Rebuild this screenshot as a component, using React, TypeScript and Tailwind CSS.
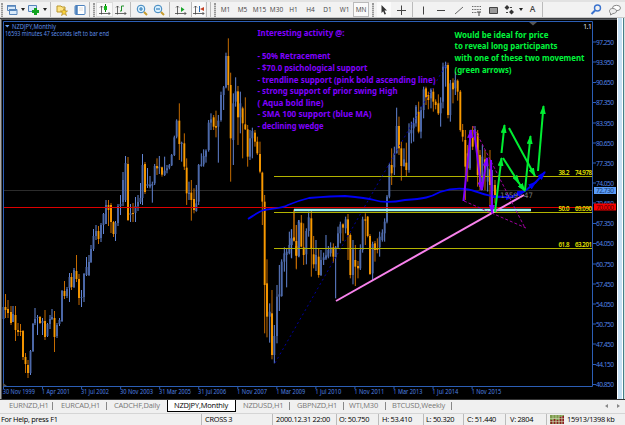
import { useId } from "react";
import type { ReactNode } from "react";

// high, low, body top, body bottom; the last value is 1 on a rising month
type Bar = [number, number, number, number, number, number];

type Segment = {
  transform: string;
  scale: number;
  bars: Bar[];
};

const segments: Segment[] = [
  {
    transform: "translate(0 0)",
    scale: 1,
    bars: [
      [3.5, 306, 327, 307, 319, 1], [5.5, 294, 318, 307, 310, 0], [8, 300, 318, 309, 313, 0],
      [11, 306, 325, 312, 323, 0], [13, 306, 322, 314, 322, 1], [15.5, 306, 341, 315, 330, 0],
      [18, 323, 336, 330, 332, 0], [20.5, 324, 336, 331, 332, 0], [23, 330, 360, 331, 357, 0],
      [25.5, 353, 373, 357, 364, 0], [28, 360, 378, 365, 373, 0], [30.5, 350, 375, 351, 373, 1],
      [33, 323, 352, 324, 351, 1], [35, 308, 325, 319, 323, 1], [37.5, 315, 335, 317, 318, 1],
      [40, 316, 324, 317, 323, 0], [42.5, 318, 335, 321, 323, 1], [45, 310, 340, 321, 337, 0],
      [47.5, 323, 337, 324, 336, 1], [50, 315, 329, 319, 324, 1], [52, 309, 320, 317, 319, 1],
      [54.5, 311, 352, 318, 337, 0], [57, 323, 338, 325, 336, 1], [59.5, 318, 326, 320, 324, 1],
      [62, 290, 322, 291, 321, 1], [64.5, 281, 299, 291, 296, 0], [67, 287, 298, 289, 296, 1],
      [69.5, 273, 302, 277, 288, 1], [71.5, 273, 290, 277, 287, 0], [74, 268, 288, 270, 287, 1],
      [76.5, 255, 282, 271, 279, 0], [79, 274, 305, 279, 298, 0], [81.5, 290, 307, 297, 298, 1],
      [84, 273, 302, 274, 297, 1], [86.5, 257, 276, 267, 275, 1], [89, 255, 276, 262, 275, 1],
      [91, 245, 263, 249, 262, 1], [93.5, 229, 251, 236, 249, 1], [96, 225, 240, 231, 236, 1],
      [98.5, 226, 244, 231, 239, 0], [101, 223, 242, 225, 238, 1], [103.5, 213, 234, 214, 225, 1],
      [106, 200, 224, 205, 224, 1], [108.5, 200, 226, 205, 210, 0], [111, 203, 233, 205, 222, 0],
      [113.5, 221, 237, 222, 234, 0], [115.5, 221, 241, 223, 234, 1], [118, 204, 226, 206, 223, 1],
      [120.5, 195, 215, 204, 206, 1], [123, 172, 206, 180, 202, 1], [125.5, 156, 202, 163, 200, 1],
      [128, 157, 221, 164, 220, 0], [130.5, 204, 222, 213, 215, 1], [133, 203, 222, 213, 214, 0],
      [135.5, 197, 222, 206, 213, 1], [138, 195, 211, 202, 206, 1], [140.5, 183, 204, 198, 202, 1],
      [142.5, 154, 205, 165, 198, 1], [145, 162, 194, 164, 192, 0], [147.5, 168, 188, 184, 186, 1],
    ],
  },
  {
    transform: "translate(150 30) scale(.33333)",
    scale: 3,
    bars: [
      [0, 438, 475, 464, 470, 1], [7, 455, 518, 462, 467, 1], [14, 402, 465, 408, 460, 1],
      [21, 385, 435, 408, 415, 0], [28, 378, 432, 410, 415, 1], [36, 410, 440, 412, 434, 0],
      [44, 380, 438, 422, 435, 1], [51, 405, 430, 415, 421, 1], [58, 402, 418, 406, 413, 1],
      [65, 372, 408, 375, 406, 1], [73, 317, 378, 322, 375, 1], [80, 268, 325, 272, 320, 1],
      [88, 220, 390, 272, 342, 0], [95, 335, 395, 338, 342, 1], [103, 310, 420, 340, 410, 0],
      [110, 385, 525, 413, 490, 0], [117, 455, 510, 488, 492, 1], [124, 450, 572, 488, 510, 0],
      [132, 475, 550, 507, 540, 0], [139, 465, 545, 520, 543, 1], [146, 402, 525, 405, 515, 1],
      [154, 370, 410, 403, 408, 1], [161, 358, 410, 378, 403, 1], [168, 358, 398, 362, 380, 1],
      [176, 270, 365, 278, 360, 1], [183, 250, 300, 268, 278, 1], [191, 255, 300, 262, 290, 0],
      [198, 242, 322, 288, 293, 0], [205, 255, 398, 272, 290, 1], [213, 185, 275, 195, 270, 1],
      [221, 168, 240, 172, 195, 1], [228, 68, 175, 78, 172, 1], [235, 25, 182, 78, 165, 0],
      [242, 128, 455, 165, 325, 0], [250, 190, 405, 220, 330, 1], [257, 142, 230, 184, 215, 1],
      [264, 168, 345, 184, 262, 0], [271, 185, 310, 220, 262, 1], [278, 230, 385, 235, 280, 0],
      [286, 202, 300, 283, 298, 0], [293, 285, 410, 298, 380, 0], [300, 300, 390, 325, 380, 1],
      [307, 293, 385, 303, 325, 1], [315, 300, 350, 308, 335, 0], [322, 320, 375, 335, 370, 0],
      [330, 335, 430, 372, 425, 0], [337, 425, 585, 428, 515, 0], [344, 495, 910, 515, 765, 0],
    ],
  },
  {
    transform: "translate(150 200) scale(.33333)",
    scale: 3,
    bars: [
      [351, 178, 412, 250, 350, 0], [359, 310, 428, 335, 350, 1], [366, 270, 478, 340, 465, 0],
      [373, 375, 490, 408, 465, 1], [381, 255, 430, 290, 408, 1], [388, 195, 333, 283, 290, 1],
      [395, 178, 290, 185, 288, 1], [403, 142, 215, 160, 185, 1], [410, 145, 262, 155, 165, 1],
      [418, 95, 163, 135, 160, 1], [425, 88, 175, 115, 135, 1], [432, 28, 125, 112, 122, 0],
      [439, 75, 208, 138, 165, 0], [446, 60, 170, 65, 168, 1],
    ],
  },
  {
    transform: "translate(290 160) scale(.33333)",
    scale: 3,
    bars: [
      [4, 208, 293, 235, 255, 1], [12, 150, 243, 233, 241, 0], [19, 195, 325, 243, 288, 0],
      [27, 180, 292, 190, 288, 1], [34, 165, 262, 188, 260, 0], [41, 190, 315, 262, 285, 0],
      [49, 205, 313, 213, 283, 1], [56, 155, 230, 172, 213, 1], [64, 152, 350, 175, 265, 0],
      [71, 228, 325, 283, 313, 0], [78, 240, 333, 285, 313, 1], [86, 265, 353, 290, 345, 0],
      [93, 270, 348, 300, 345, 1], [101, 278, 315, 292, 300, 1], [108, 225, 300, 286, 296, 1],
      [115, 258, 295, 270, 290, 1], [122, 247, 290, 262, 280, 1], [130, 250, 308, 262, 290, 0],
      [137, 258, 415, 262, 292, 1], [144, 200, 265, 220, 262, 1], [151, 185, 250, 193, 220, 1],
      [159, 190, 243, 193, 203, 0], [167, 170, 220, 178, 205, 1], [174, 162, 300, 178, 225, 0],
      [181, 220, 355, 225, 345, 0], [189, 240, 373, 268, 345, 1], [196, 255, 378, 300, 320, 0],
      [204, 303, 355, 318, 325, 0], [211, 253, 330, 270, 325, 1], [218, 170, 278, 178, 270, 1],
      [226, 160, 255, 178, 182, 0], [233, 168, 232, 170, 228, 0], [240, 222, 345, 228, 342, 0],
      [248, 245, 360, 252, 340, 1], [255, 243, 305, 250, 270, 0], [262, 235, 280, 265, 270, 0],
      [269, 215, 290, 230, 262, 1], [277, 208, 245, 218, 240, 1], [284, 175, 245, 185, 220, 1],
      [291, 105, 190, 110, 185, 1], [298, 10, 115, 15, 110, 1],
    ],
  },
  {
    transform: "translate(360 40) scale(.33333)",
    scale: 3,
    bars: [
      [95, 325, 435, 375, 400, 0], [103, 320, 405, 340, 382, 1], [110, 203, 340, 258, 340, 1],
      [117, 230, 345, 258, 325, 0], [124, 305, 422, 325, 378, 0], [132, 325, 380, 358, 378, 1],
      [139, 308, 408, 368, 390, 0], [147, 250, 398, 278, 390, 1], [154, 245, 310, 270, 280, 1],
      [161, 233, 305, 250, 265, 1], [168, 195, 260, 200, 250, 1], [176, 185, 280, 215, 275, 0],
      [183, 200, 295, 210, 275, 1], [191, 140, 235, 148, 210, 1], [198, 140, 195, 145, 172, 0],
      [205, 155, 208, 165, 180, 0], [213, 145, 205, 148, 175, 1], [220, 145, 215, 155, 185, 0],
      [227, 178, 208, 185, 195, 0], [235, 163, 225, 190, 220, 0], [242, 172, 260, 188, 220, 1],
      [249, 68, 205, 80, 185, 1], [257, 65, 140, 75, 85, 1], [264, 68, 235, 75, 225, 0],
      [271, 120, 245, 130, 225, 1], [279, 115, 190, 128, 148, 0], [286, 95, 165, 120, 145, 1],
      [293, 118, 182, 122, 155, 0], [301, 150, 275, 155, 270, 0], [308, 252, 305, 270, 290, 0],
      [316, 270, 480, 300, 380, 0],
    ],
  },
  {
    transform: "translate(455 90) scale(.33333)",
    scale: 3,
    bars: [
      [38, 165, 275, 190, 235, 0], [45, 120, 240, 125, 235, 1], [53, 108, 180, 140, 170, 0],
      [60, 108, 150, 118, 148, 1], [68, 120, 290, 130, 255, 0], [75, 180, 300, 195, 290, 0],
      [82, 165, 300, 200, 290, 1], [90, 180, 300, 208, 240, 0], [98, 205, 305, 235, 275, 1],
      [105, 180, 345, 238, 285, 0], [112, 240, 370, 285, 300, 1], [120, 270, 340, 285, 315, 0],
    ],
  },
];

const prices = [
  [42, "97.250"], [62, "93.950"], [82.5, "90.650"], [102.5, "87.350"], [123, "83.950"],
  [143, "80.650"], [163, "77.350"], [183, "74.050"], [203, "70.650"], [223.5, "67.350"],
  [243.5, "64.050"], [264, "60.750"], [284, "57.450"], [304, "54.050"], [324, "50.750"],
  [344, "47.450"], [364.5, "44.150"], [384.5, "40.850"],
] as const;

const dates = [
  ["30 Nov 1999", 32], ["1 Apr 2001", 28], ["31 Jul 2002", 28], ["30 Nov 2003", 33], ["31 Mar 2005", 32],
  ["31 Jul 2006", 28], ["1 Nov 2007", 30], ["1 Mar 2009", 29], ["1 Jul 2010", 26], ["1 Nov 2011", 30],
  ["1 Mar 2013", 29], ["1 Jul 2014", 26], ["1 Nov 2015", 30],
] as const;

const notes = [
  [33, 87, "Interesting activity @:"],
  [56, 73, "- 50% Retracement"],
  [67.5, 110, "- $70.0 psichological support"],
  [79.5, 178, "- trendline support (pink bold ascending line)"],
  [91, 140, "- strong support of prior swing High"],
  [102.5, 66, "( Aqua bold line)"],
  [114, 114, "- SMA 100 support (blue MA)"],
  [126, 66, "- declining wedge"],
] as const;

const plan = [
  [34.5, 94, "Would be ideal for price"],
  [46, 103, "to reveal long participants"],
  [58, 130, "with one of these two movement"],
  [69.5, 57, "(green arrows)"],
] as const;

const Candle = ({ bar, scale }: { bar: Bar; scale: number }) => {
  const [x, high, low, top, bottom, up] = bar;
  return (
    <g>
      <path d={`M${x} ${high}V${low}`} stroke={up ? "#6285d4" : "#c56b00"} strokeWidth={scale} />
      <rect
        x={x - scale * 0.95}
        y={top}
        width={scale * 1.9}
        height={Math.max(bottom - top, scale)}
        fill={up ? "#4d69aa" : "#f99a00"}
      />
    </g>
  );
};

const Arrow = ({ d, color, width = 2 }: { d: string; color: string; width?: number }) => {
  const id = useId();
  return (
    <>
      <marker id={id} viewBox="0 0 9 6" refX="8" refY="3" markerWidth="9" markerHeight="6" markerUnits="userSpaceOnUse" orient="auto">
        <path d="M0 0L9 3L0 6Z" fill={color} />
      </marker>
      <path d={d} stroke={color} strokeWidth={width} fill="none" markerEnd={`url(#${id})`} />
    </>
  );
};

const Chart = () => (
  <svg viewBox="0 19 617 380" className="block h-[380px] w-[617px] shrink-0 bg-black" fontFamily="'Noto Sans', sans-serif">
    <path d="M0 19H617" stroke="#55585c" strokeWidth="2" />
    <path d="M.5 19V399" stroke="#aaa" />
    <path d="M1.5 19V399" stroke="#555" />
    <path d="M3 190.5H592" stroke="#2c2c2c" />

    <g>
      {segments.map((s) => (
        <g key={s.transform} transform={s.transform}>
          {s.bars.map((bar) => (
            <Candle key={bar[0]} bar={bar} scale={s.scale} />
          ))}
        </g>
      ))}
    </g>

    {/* fibonacci levels */}
    <path d="M274 176.5H592M274 212.5H592M274 248.5H592" stroke="#b3b300" />
    <path d="M3 207.5H592" stroke="#dd0000" />
    <path d="M275 363L447 63" stroke="#0000a0" strokeDasharray="2 3" />

    {/* moving average */}
    <path
      d="M248 219C253 216 258 212 264 210C273 208 281 209 288 205C295 202 301 200 309 198C321 197 333 196 345 196C356 197 367 198 374 200C383 203 395 202 405 200C424 199 431 197 440 192C449 189 456 188 465 189C477 190 483 196 497 196.500L505 197"
      stroke="#0000f5"
      strokeWidth="1.8"
      fill="none"
    />
    <Arrow d="M493 197L514 197" color="#0000f5" />
    <Arrow d="M511 197L525 191" color="#0000f5" />
    <Arrow d="M525 191L536 182" color="#0000f5" />
    <Arrow d="M535 183L545 172" color="#0000f5" />

    <path d="M294 210H531" stroke="#9ff5f2" strokeWidth="2.3" />
    <path d="M336 301L524 195" stroke="#f982ed" strokeWidth="2" />
    <path d="M473 126L525 228M464 201L526 228" stroke="#a000a0" strokeDasharray="3 2" />

    <text x="500" y="197.500" fontSize="7.500" fill="#777" textLength="33" fontFamily="'DejaVu Sans', sans-serif">1559 : 47</text>

    <Arrow d="M463.500 201L471 130" color="#8000ff" />
    <Arrow d="M474 130L481.500 190" color="#8000ff" />
    <Arrow d="M482 189L487 158" color="#8000ff" />
    <Arrow d="M491 160L492 213" color="#8000ff" />
    <Arrow d="M495 212L501.500 158" color="#00ee32" />
    <Arrow d="M501.500 153L504.500 125" color="#00ee32" />
    <Arrow d="M503 158L519 183" color="#00ee32" />
    <Arrow d="M509 128L535 176" color="#00ee32" />
    <Arrow d="M515 178L525 191" color="#00ee32" />
    <Arrow d="M525 190L530.500 136" color="#00ee32" />
    <Arrow d="M538 171L543.500 106" color="#00ee32" />

    {/* frame and scales */}
    <path d="M3.500 387V21.500H592.500V386.500H3" stroke="#2c5eb5" fill="none" />
    <path d="M3 383V386H7Z" fill="#555" />
    <path d="M529 22H537L533 25.500Z" fill="#555" />
    <g fontSize="6.600" fill="#4f80e0">
      {prices.map(([y, label]) => (
        <g key={label}>
          <path d={`M593 ${y}h3`} stroke="#2c5eb5" />
          <text x="596" y={y + 2.5} textLength="18">{label}</text>
        </g>
      ))}
      {dates.map(([label, w], i) => (
        <g key={label}>
          <path d={`M${3.5 + i * 39.05} 387v2`} stroke="#2c5eb5" />
          <text x={2.8 + i * 39.05} y="394" textLength={w} lengthAdjust="spacingAndGlyphs">{label}</text>
        </g>
      ))}
    </g>
    <path d="M594 187H616V194H594Z" fill="#5a9cf8" />
    <text x="596" y="193" fontSize="6.600" fill="#17386e" textLength="18">72.730</text>
    <path d="M594 203.500H616V210.500H594Z" fill="#f50000" />
    <text x="596" y="209.500" fontSize="6.600" fill="#500" textLength="18">70.000</text>

    <g fontSize="6.200" fontWeight="600" fill="#e4e400">
      <text x="558.500" y="175" textLength="11">38.2</text>
      <text x="575" y="175" textLength="17">74.978</text>
      <text x="558.500" y="211" textLength="11">50.0</text>
      <text x="575" y="211" textLength="17">69.090</text>
      <text x="558.500" y="247" textLength="11">61.8</text>
      <text x="575" y="247" textLength="17">63.201</text>
    </g>

    <path d="M5 25H9.500L7.250 27.500Z" fill="#6aa2f5" />
    <g fontSize="7" fill="#5c8ee8">
      <text x="12" y="28.500" textLength="44" lengthAdjust="spacingAndGlyphs">NZDJPY,Monthly</text>
      <text x="5" y="36.300" textLength="104" lengthAdjust="spacingAndGlyphs">16593 minutes 47 seconds left to bar end</text>
    </g>
    <text x="583" y="29" fontSize="7.500" fill="#ddd" textLength="9">1.1</text>

    <g fontSize="8.500" fontWeight="700" fill="#8000ff">
      {notes.map(([y, w, label]) => (
        <text key={label} x="257.500" y={y + 3} textLength={w} lengthAdjust="spacingAndGlyphs">{label}</text>
      ))}
    </g>
    <g fontSize="8.500" fontWeight="700" fill="#00f53c">
      {plan.map(([y, w, label]) => (
        <text key={label} x="454.500" y={y + 3} textLength={w} lengthAdjust="spacingAndGlyphs">{label}</text>
      ))}
    </g>
  </svg>
);

const Cell = ({ className, children }: { className: string; children?: ReactNode }) => (
  <span className={`flex h-full shrink-0 items-center justify-center ${className}`}>{children}</span>
);

const Icon = ({ children, color = "#444" }: { children: ReactNode; color?: string }) => (
  <svg viewBox="0 0 12 12" className="h-3 w-3 shrink-0" fill="none" stroke={color}>
    {children}
  </svg>
);

const Caret = () => (
  <svg viewBox="0 0 4 3" className="h-[3px] w-1 shrink-0">
    <path d="M0 0H4L2 3Z" fill="#222" />
  </svg>
);

const Grip = () => <span className="h-[14px] w-[2px] border-x border-dotted border-[#999] bg-[#ccc]" />;

const Rule = () => <span className="h-full w-px bg-[#bbb]" />;

const axes = "M2.500 2V10.500M0 9.500H11M1 3.500L2.500 2L4 3.500M9.500 8L11 9.500L9.500 11";

const frames = ["M1", "M5", "M15", "M30", "H1", "H4", "D1", "W1"];

const Toolbar = () => (
  <div className="flex h-[18px] w-full shrink-0 items-center border-t-2 border-b border-t-[#e2e2e2] border-b-[#c8c8c8] bg-[#f2f2f2] text-[6.5px] text-[#444]">
    <Cell className="w-1"><Grip /></Cell>
    <Cell className="w-4">
      <Icon color="#5684ba"><path d="M1.500 1.500H9.500V6.500H1.500ZM3.500 5.500H11V10.500H3.500Z" fill="#d9eafa" /><path d="M1 2H10M3 6H11" strokeWidth="1.500" /></Icon>
    </Cell>
    <Cell className="w-[6px]"><Caret /></Cell>
    <Cell className="w-[15px]">
      <Icon><path d="M.5 1.500H8.500V7.500H.5Z" fill="#d9eafa" stroke="#5684ba" /><path d="M7.500 4V11M4 7.500H11" stroke="#12a321" strokeWidth="3" /></Icon>
    </Cell>
    <Cell className="w-[7px]"><Caret /></Cell>
    <Cell className="w-[5px]"><Rule /></Cell>
    <Cell className="w-[18px]">
      <Icon color="#b9962d"><path d="M1 2H5L6 3H9V8H1Z" fill="#ffe483" /><path d="M8 4.500L9 7L11.500 7L9.500 8.700L10.500 11.500L8 9.800L5.500 11.500L6.500 8.700L4.500 7H7Z" fill="#fbd43a" stroke="#b08624" strokeWidth=".7" /></Icon>
    </Cell>
    <Cell className="w-[17px]">
      <Icon color="#4b80bd"><rect x="1" y="1.500" width="10" height="9" rx="1" fill="#fff" /><path d="M2.500 2V10" strokeWidth="2.500" /><path d="M5 4H9M5 6H9" stroke="#ddd" /></Icon>
    </Cell>
    <Cell className="w-[3px]"><Rule /></Cell>
    <Cell className="w-[5px]"><Grip /></Cell>
    <Cell className="w-[17px] border border-[#ddd] bg-[#fafafa]">
      <Icon><path d={axes} strokeWidth=".8" /><path d="M6.500 0V8" stroke="#087b08" /><path d="M5 2H8V6H5Z" fill="#16b91c" stroke="none" /></Icon>
    </Cell>
    <Cell className="w-[15px]">
      <Icon><path d={axes} strokeWidth=".8" /><path d="M5 7H6.500V2H9" stroke="#20922b" /></Icon>
    </Cell>
    <Cell className="w-[5px]"><Rule /></Cell>
    <Cell className="w-[17px]">
      <Icon color="#3982bc"><circle cx="5" cy="5" r="3.800" fill="#d9f1ff" /><path d="M3 5H7M5 3V7" strokeWidth="1.200" /><path d="M8 8L11 11" stroke="#c79c2f" strokeWidth="2" /></Icon>
    </Cell>
    <Cell className="w-[17px]">
      <Icon color="#3982bc"><circle cx="5" cy="5" r="3.800" fill="#d9f1ff" /><path d="M3 5H7" strokeWidth="1.200" /><path d="M8 8L11 11" stroke="#c79c2f" strokeWidth="2" /></Icon>
    </Cell>
    <Cell className="w-[5px]"><Rule /></Cell>
    <Cell className="w-[18px]">
      <Icon><path d={axes} strokeWidth=".8" /><path d="M6 3L9.500 5.500L6 8Z" fill="#19a52a" stroke="none" /></Icon>
    </Cell>
    <Cell className="w-[2px]"><Rule /></Cell>
    <Cell className="w-[13px] bg-[#fafafa]">
      <Icon><path d={axes} strokeWidth=".8" /><path d="M6.500 2V8" stroke="#2c6db5" /><path d="M11 3L7 5L11 7Z" fill="#c43f21" stroke="none" /></Icon>
    </Cell>
    <Cell className="w-[3px]"><Rule /></Cell>
    <Cell className="w-[4px]"><Rule /></Cell>
    <Cell className="w-[5px]"><Grip /></Cell>
    {frames.map((label) => (
      <Cell key={label} className="w-[17px]">{label}</Cell>
    ))}
    <Cell className="w-[16px] border border-[#bbb] bg-[#fafafa]">MN</Cell>
    <Cell className="w-2"><Grip /></Cell>
    <Cell className="w-[14px] bg-[#fafafa]">
      <Icon><path d="M3.500 1L9 6.500H6.500L8 10L6.500 10.500L5.200 7.300L3.500 9Z" fill="#333" stroke="none" /></Icon>
    </Cell>
    <Cell className="w-[20px]"><Icon><path d="M6.500 1.500V11M2 6.500H11" /></Icon></Cell>
    <Cell className="w-[3px]"><Rule /></Cell>
    <Cell className="w-[18px]"><Icon><path d="M6.500 2.500V10.500" /></Icon></Cell>
    <Cell className="w-[18px]"><Icon><path d="M2 6.500H10" /></Icon></Cell>
    <Cell className="w-[17px]"><Icon><path d="M2 10L10 3" strokeWidth=".8" /></Icon></Cell>
    <Cell className="w-[17px]">
      <Icon><path d="M2 2.500H11M2 5.500H11M2 8.500H7" strokeDasharray="1 .6" strokeWidth=".8" /><path d="M7 8H11M9 8V12" /></Icon>
    </Cell>
    <Cell className="w-[17px]"><Icon><path d="M2.500 3.500H10.500V9.500H2.500Z" fill="#999" /></Icon></Cell>
    <Cell className="w-[16px]">
      <Icon><path d="M4 1L6.500 3.500L4 6L1.500 3.500ZM8.500 5.500L11 8L8.500 10.500L6 8Z" fill="#333" stroke="none" /><path d="M7 3.500H9M3 8.500H5" /></Icon>
    </Cell>
    <Cell className="w-[7px]"><Caret /></Cell>
    <Cell className="w-[17px] text-[8.5px] font-semibold">A</Cell>
    <Cell className="w-[3px]"><Rule /></Cell>
    <span className="flex-1" />
    <Cell className="w-[18px]">
      <Icon color="#3b73ce"><circle cx="7.500" cy="4" r="3" strokeWidth="1.400" /><path d="M5 6.500L1.500 10" strokeWidth="2" /></Icon>
    </Cell>
    <Cell className="w-[20px]">
      <Icon color="#888"><ellipse cx="7.500" cy="4" rx="4" ry="2.700" fill="#fff" /><path d="M3.500 4.500C6 4.500 7.500 5.500 7.500 7S6 9.500 4 9.500L1.500 11V9C-.5 7.500.5 4.500 3.500 4.500Z" fill="#eee" /></Icon>
    </Cell>
  </div>
);

const tabs = [
  ["EURNZD,H1", "w-[53px] pl-[9px]"],
  ["EURCAD,H1", "w-[54px] pl-2"],
  ["CADCHF,Daily", "w-[60px] pl-[7px]"],
  ["NZDJPY,Monthly", "w-[69px] pl-[6px]"],
  ["NZDUSD,H1", "w-[54px] pl-[7px]"],
  ["GBPNZD,H1", "w-[54px] pl-[7px]"],
  ["WTI,M30", "w-[42px] pl-[5px]"],
  ["BTCUSD,Weekly", "w-[66px] pl-[6px]"],
] as const;

const Tabs = () => (
  <div className="flex h-[14px] shrink-0 items-start border-t border-[#333] bg-[#f0f0f0] text-[7.5px] leading-[11px] tracking-[-0.2px] text-[#777]">
    {tabs.map(([label, width], i) => (
      <span key={label} className={`${width} flex shrink-0 whitespace-nowrap ${i === 3 ? "h-[12px] border border-t-0 border-black bg-white text-black" : "h-[11px] items-center"}`}>
        <span className="flex-1">{label}</span>
        {i !== 2 && i !== 3 && <span className="h-2 w-px bg-[#888]" />}
      </span>
    ))}
    <span className="flex-1" />
    <span className="flex h-[11px] items-center gap-[9px] pr-[5px]">
      <svg viewBox="0 0 3 4" className="h-1 w-[3px]"><path d="M3 0V4L0 2Z" fill="#888" /></svg>
      <svg viewBox="0 0 3 4" className="h-1 w-[3px]"><path d="M0 0V4L3 2Z" fill="#888" /></svg>
    </span>
  </div>
);

const status = [
  ["For Help, press F1", "w-[201px] pl-px"],
  ["CROSS 3", "w-[71px] border-l pl-[3px]"],
  ["2000.12.31 22:00", "w-[64px] border-l pl-[3px]"],
  ["O: 50.750", "w-[42px] border-l pl-[2px]"],
  ["H: 53.410", "w-[45px] border-l pl-[3px]"],
  ["L: 50.320", "w-[40px] border-l pl-[2px]"],
  ["C: 51.440", "w-[42px] border-l pl-[3px]"],
  ["V: 2804", "w-[41px] border-l pl-[4px]"],
] as const;

const StatusBar = () => (
  <div className="flex h-3 shrink-0 items-center border-t border-[#d5d5d5] bg-[#f0f0f0] text-[7.4px] leading-[11px] tracking-[-0.28px] text-black">
    {status.map(([label, width]) => (
      <span key={label} className={`${width} h-[11px] shrink-0 whitespace-nowrap border-[#bbb]`}>{label}</span>
    ))}
    <span className="flex h-[11px] items-center gap-[3px] border-l border-[#bbb] pl-[3px]">
      <svg viewBox="0 0 14 9" className="h-[9px] w-[14px]">
        <path d="M0 0H14V9H0Z" fill="#7c9b4c" />
        <path d="M1.500 5V9M4.500 4V9M7.500 5V9M10.500 2V9M13 1V9" stroke="#8b2020" strokeWidth="2" />
        <path d="M0 3.500H14M0 6.500H14M3 0V9M6 0V9M9 0V9M12 0V9" stroke="#e3e7c8" strokeWidth=".5" />
      </svg>
      <span className="whitespace-nowrap">15913/1398 kb</span>
    </span>
  </div>
);

const App = () => {
  return (
    <main className="flex h-[425px] w-[625px] flex-col overflow-hidden bg-[#f0f0f0] font-['Open_Sans',sans-serif]">
      <Toolbar />
      <div className="flex h-[381px] shrink-0 items-end bg-[#3c3f42]">
        <Chart />
        <div className="flex h-full w-2">
          <span className="w-px bg-white" />
          <span className="w-1 bg-[#c5e0f4]" />
          <span className="w-px bg-white" />
          <span className="w-px bg-[#43818b]" />
          <span className="w-px bg-[#ddd]" />
        </div>
      </div>
      <Tabs />
      <StatusBar />
    </main>
  );
};

export default App;
